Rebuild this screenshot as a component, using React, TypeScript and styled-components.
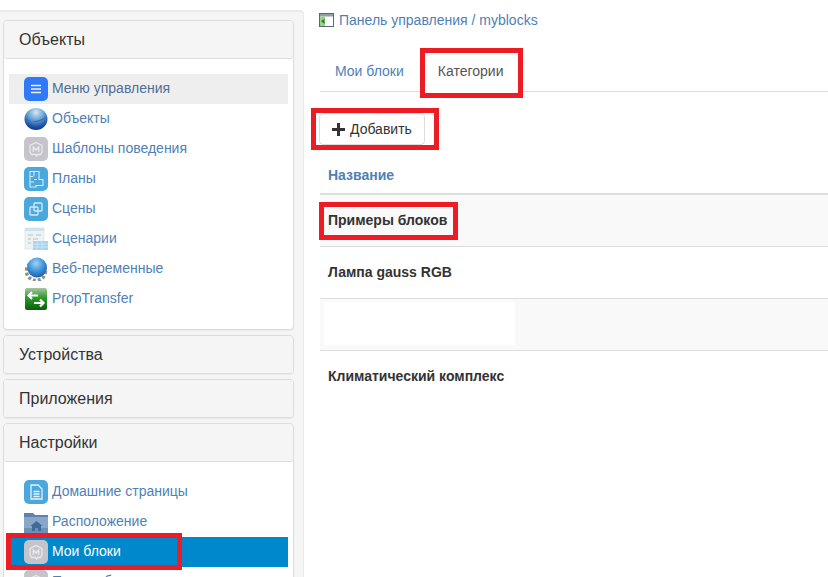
import React from "react";
import styled, { createGlobalStyle } from "styled-components";

const Global = createGlobalStyle`
  html, body { margin: 0; padding: 0; background: #fff; overflow: hidden; }
  body { font-family: "Liberation Sans", Arial, sans-serif; font-size: 14px; color: #333; }
  * { box-sizing: border-box; }
`;

const Page = styled.div`
  position: relative;
  display: flex;
  width: 828px;
  height: 577px;
  overflow: hidden;
`;

const Sidebar = styled.aside`
  flex: 0 0 304px;
  margin-top: 10px;
  padding: 8px 9px 0 3px;
  background: #f5f5f5;
  border-top: 2px solid #eaeaea;
  border-right: 1px solid #eaeaea;
  border-top-right-radius: 4px;
  display: flex;
  flex-direction: column;
  gap: 5px;
`;

const Panel = styled.section`
  background: #fff;
  border: 1px solid #ddd;
  border-radius: 4px;
  box-shadow: 0 1px 1px rgba(0, 0, 0, 0.05);
  flex: none;
`;

const PanelHeading = styled.h3<{ $open?: boolean }>`
  margin: 0;
  height: ${(p) => (p.$open ? 38 : 37)}px;
  padding: 0 15px;
  display: flex;
  align-items: center;
  font-size: 16px;
  font-weight: 400;
  color: #333;
  background: #f5f5f5;
  border-bottom: ${(p) => (p.$open ? "1px solid #ddd" : "none")};
  border-radius: 3px;
`;

const PanelBody = styled.ul<{ $bottom: number }>`
  list-style: none;
  margin: 0;
  padding: 15px 5px ${(p) => p.$bottom}px;
`;

const NavItem = styled.li<{ $state?: "hover" | "active" }>`
  height: 30px;
  display: flex;
  align-items: center;
  gap: 4px;
  padding-left: 15px;
  background: ${(p) =>
    p.$state === "active" ? "#0088cc" : p.$state === "hover" ? "#eeeeee" : "transparent"};
  color: ${(p) =>
    p.$state === "active" ? "#ffffff" : p.$state === "hover" ? "#4f6f96" : "#4f7fb5"};
  font-size: 14px;
  white-space: nowrap;
`;

const NavLabel = styled.span`
  padding-bottom: 2px;
`;

const IconBox = styled.span`
  flex: 0 0 24px;
  width: 24px;
  height: 24px;
  display: block;
  svg { display: block; }
`;

const Main = styled.main`
  flex: 1;
  min-width: 0;
  padding: 12px 0 0 16px;
  display: flex;
  flex-direction: column;
`;

const Crumbs = styled.div`
  display: flex;
  align-items: center;
  gap: 5px;
  height: 16px;
  margin-left: -1px;
  color: #4f7fb5;
  font-size: 14px;
  white-space: nowrap;
`;

const TabBar = styled.div`
  margin-top: 21px;
  height: 43px;
  display: flex;
  gap: 4px;
  border-bottom: 1px solid #ddd;
  font-size: 14px;
`;

const Tab = styled.div<{ $active?: boolean }>`
  height: 43px;
  padding: 0 15px;
  display: flex;
  align-items: center;
  color: ${(p) => (p.$active ? "#555" : "#4f7fb5")};
  background: ${(p) => (p.$active ? "#fff" : "transparent")};
`;

const Toolbar = styled.div`
  margin-top: 21px;
  margin-left: -1px;
  display: flex;
`;

const AddButton = styled.div`
  width: 106px;
  height: 32px;
  display: flex;
  align-items: center;
  gap: 5px;
  padding-left: 12px;
  background: #fff;
  border: 1px solid #ddd;
  border-radius: 4px;
  color: #333;
  font-size: 14px;
`;

const Table = styled.div`
  margin-top: 12px;
`;

const HeaderRow = styled.div`
  height: 38px;
  padding: 0 8px 1px;
  display: flex;
  align-items: center;
  font-size: 14px;
  font-weight: 700;
  color: #4f7fb5;
  border-bottom: 2px solid #ddd;
`;

const Row = styled.div<{ $striped?: boolean }>`
  height: 52px;
  padding: 0 8px 2px;
  display: flex;
  align-items: center;
  font-size: 14px;
  font-weight: 700;
  color: #333;
  background: ${(p) => (p.$striped ? "#f9f9f9" : "#fff")};
  border-bottom: 1px solid #ddd;
  &:last-child { border-bottom: none; }
`;

const Blank = styled.div`
  width: 191px;
  height: 43px;
  margin-left: -4px;
  background: #fff;
`;

const Mark = styled.div<{ $x: number; $y: number; $w: number; $h: number }>`
  position: absolute;
  left: ${(p) => p.$x}px;
  top: ${(p) => p.$y}px;
  width: ${(p) => p.$w}px;
  height: ${(p) => p.$h}px;
  border: 5px solid #ed1c24;
  pointer-events: none;
`;

const Rounded = ({ fill, children }: { fill: string; children?: React.ReactNode }) => (
  <svg width="24" height="24" viewBox="0 0 24 24">
    <rect width="24" height="24" rx="5" fill={fill} />
    {children}
  </svg>
);

const MenuIcon = () => (
  <Rounded fill="#3079f8">
    <path d="M7 8.500h10M7 12h10M7 15.500h10" stroke="#e8f0ff" strokeWidth="1.400" fill="none" />
  </Rounded>
);

const BlockIcon = () => (
  <Rounded fill="#c4c4ca">
    <path
      d="M12 5.500l6 3v6.500l-1.500 2.500h-3l-1 1.500-1-1.500H7.500L6 15V8.500z"
      fill="none"
      stroke="#e9e9ec"
      strokeWidth="1.300"
    />
    <path d="M9.300 15v-5l2.700 3 2.700-3v5" fill="none" stroke="#eeeef0" strokeWidth="1.200" />
  </Rounded>
);

const SphereIcon = () => (
  <svg width="24" height="24" viewBox="0 0 24 24">
    <defs>
      <radialGradient id="sph" cx="50%" cy="20%" r="85%">
        <stop offset="0%" stopColor="#d5e8f5" />
        <stop offset="45%" stopColor="#5f9bd0" />
        <stop offset="75%" stopColor="#1f55a8" />
        <stop offset="100%" stopColor="#0f2f80" />
      </radialGradient>
    </defs>
    <ellipse cx="12" cy="12" rx="11.500" ry="11" fill="url(#sph)" />
    <path d="M1.500 11c3 4 9 5.500 21-1.500-6 7-14 7-21 1.500z" fill="#1a4a9c" opacity="0.55" />
  </svg>
);

const PlanIcon = () => (
  <Rounded fill="#4aa8dc">
    <path
      d="M6 4.500h9v8h4v6H12v1.500H6zM10 4.500v5M6 9.500h3M10 12.500h3M6 15h4"
      fill="none"
      stroke="#d5ecf8"
      strokeWidth="1.100"
    />
  </Rounded>
);

const SceneIcon = () => (
  <Rounded fill="#4aa8dc">
    <rect x="6" y="10" width="8" height="8" rx="1" fill="none" stroke="#d5ecf8" strokeWidth="1.300" />
    <rect x="10" y="6" width="8" height="8" rx="1" fill="none" stroke="#d5ecf8" strokeWidth="1.300" />
  </Rounded>
);

const ScriptIcon = () => (
  <svg width="24" height="24" viewBox="0 0 24 24">
    <rect x="1" y="1" width="19" height="21" fill="#eef2f4" stroke="#d5dce0" strokeWidth="0.600" />
    <rect x="1" y="1" width="19" height="3" fill="#cfe3ef" />
    <path d="M4 8h5M12 8h5M4 12h3M9 12h5M4 16h3" stroke="#b8c2c8" strokeWidth="1" />
    <rect x="9" y="14" width="15" height="9" fill="#a5d5ee" />
    <path d="M9 17h15M9 20h15M13 14v9M18 14v9" stroke="#d5ecf8" strokeWidth="0.700" />
  </svg>
);

const WebIcon = () => (
  <svg width="24" height="24" viewBox="0 0 24 24">
    <defs>
      <radialGradient id="web" cx="45%" cy="30%" r="75%">
        <stop offset="0%" stopColor="#9fd4f5" />
        <stop offset="55%" stopColor="#3a8fd8" />
        <stop offset="100%" stopColor="#1a5aa5" />
      </radialGradient>
    </defs>
    <circle cx="12" cy="14" r="9.500" fill="none" stroke="#8c9094" strokeWidth="3.500" strokeDasharray="3 2" />
    <circle cx="13" cy="10.500" r="10" fill="url(#web)" />
  </svg>
);

const TransferIcon = () => (
  <svg width="24" height="24" viewBox="0 0 24 24">
    <defs>
      <linearGradient id="trn" x1="0" y1="0" x2="0" y2="1">
        <stop offset="0%" stopColor="#a8c4a0" />
        <stop offset="45%" stopColor="#2a9a2a" />
        <stop offset="100%" stopColor="#0a5f0a" />
      </linearGradient>
    </defs>
    <rect x="1" y="1" width="22" height="22" rx="2" fill="url(#trn)" />
    <path d="M14 8.500H4.500M8 5L4.500 8.500 8 12M10 16h9.500M16 12.500l3.500 3.500-3.500 3.500" fill="none" stroke="#fff" strokeWidth="2.200" />
  </svg>
);

const PageIcon = () => (
  <Rounded fill="#4aa8dc">
    <path d="M7 5h7l4 4v10H7zM9.500 11.500h6M9.500 14h6M9.500 16.500h6" fill="none" stroke="#e2f2fb" strokeWidth="1.300" />
  </Rounded>
);

const FolderIcon = () => (
  <svg width="24" height="24" viewBox="0 0 24 24">
    <path d="M0 3h9l2 2h13v3H0z" fill="#5d82ad" />
    <rect x="0" y="7" width="24" height="16" rx="1" fill="#89a7c9" />
    <rect x="0" y="18" width="24" height="5" fill="#6f90b5" />
    <path d="M12.500 11l6 5h-1.500v5h-3v-3h-3v3H8v-5H6.500z" fill="#3f6a9a" />
  </svg>
);

const PanelMiniIcon = () => (
  <svg width="15" height="14" viewBox="0 0 15 14">
    <rect x="0.500" y="0.500" width="14" height="13" fill="#fff" stroke="#5a6a70" />
    <rect x="1" y="1" width="13" height="2.500" fill="#8aa0aa" />
    <rect x="1" y="3.500" width="5" height="9.500" fill="#9ed08c" />
    <path d="M5.500 5.500L2 8.300l3.500 2.700z" fill="#1f8a2f" />
  </svg>
);

const PlusIcon = () => (
  <svg width="13" height="13" viewBox="0 0 13 13">
    <path d="M5 0h3v5h5v3H8v5H5V8H0V5h5z" fill="#333" />
  </svg>
);

type Item = { icon: React.ReactNode; label: string; state?: "hover" | "active" };

const objects: Item[] = [
  { icon: <MenuIcon />, label: "Меню управления", state: "hover" },
  { icon: <SphereIcon />, label: "Объекты" },
  { icon: <BlockIcon />, label: "Шаблоны поведения" },
  { icon: <PlanIcon />, label: "Планы" },
  { icon: <SceneIcon />, label: "Сцены" },
  { icon: <ScriptIcon />, label: "Сценарии" },
  { icon: <WebIcon />, label: "Веб-переменные" },
  { icon: <TransferIcon />, label: "PropTransfer" },
];

const settings: Item[] = [
  { icon: <PageIcon />, label: "Домашние страницы" },
  { icon: <FolderIcon />, label: "Расположение" },
  { icon: <BlockIcon />, label: "Мои блоки", state: "active" },
  { icon: <BlockIcon />, label: "Прочие блоки" },
];

const Nav = ({ items, bottom }: { items: Item[]; bottom: number }) => (
  <PanelBody $bottom={bottom}>
    {items.map((i) => (
      <NavItem key={i.label} $state={i.state}>
        <IconBox>{i.icon}</IconBox>
        <NavLabel>{i.label}</NavLabel>
      </NavItem>
    ))}
  </PanelBody>
);

export default function App() {
  return (
    <Page>
      <Global />
      <Sidebar>
        <Panel>
          <PanelHeading $open>Объекты</PanelHeading>
          <Nav items={objects} bottom={15} />
        </Panel>
        <Panel>
          <PanelHeading>Устройства</PanelHeading>
        </Panel>
        <Panel>
          <PanelHeading>Приложения</PanelHeading>
        </Panel>
        <Panel>
          <PanelHeading $open>Настройки</PanelHeading>
          <Nav items={settings} bottom={15} />
        </Panel>
      </Sidebar>
      <Main>
        <Crumbs>
          <PanelMiniIcon />
          Панель управления / myblocks
        </Crumbs>
        <TabBar>
          <Tab>Мои блоки</Tab>
          <Tab $active>Категории</Tab>
        </TabBar>
        <Toolbar>
          <AddButton>
            <PlusIcon />
            Добавить
          </AddButton>
        </Toolbar>
        <Table>
          <HeaderRow>Название</HeaderRow>
          <Row $striped>Примеры блоков</Row>
          <Row>Лампа gauss RGB</Row>
          <Row $striped>
            <Blank />
          </Row>
          <Row>Климатический комплекс</Row>
        </Table>
      </Main>
      <Mark $x={420} $y={48} $w={103} $h={50} />
      <Mark $x={311} $y={108} $w={128} $h={42} />
      <Mark $x={319} $y={202} $w={139} $h={38} />
      <Mark $x={6} $y={533} $w={176} $h={37} />
    </Page>
  );
}
